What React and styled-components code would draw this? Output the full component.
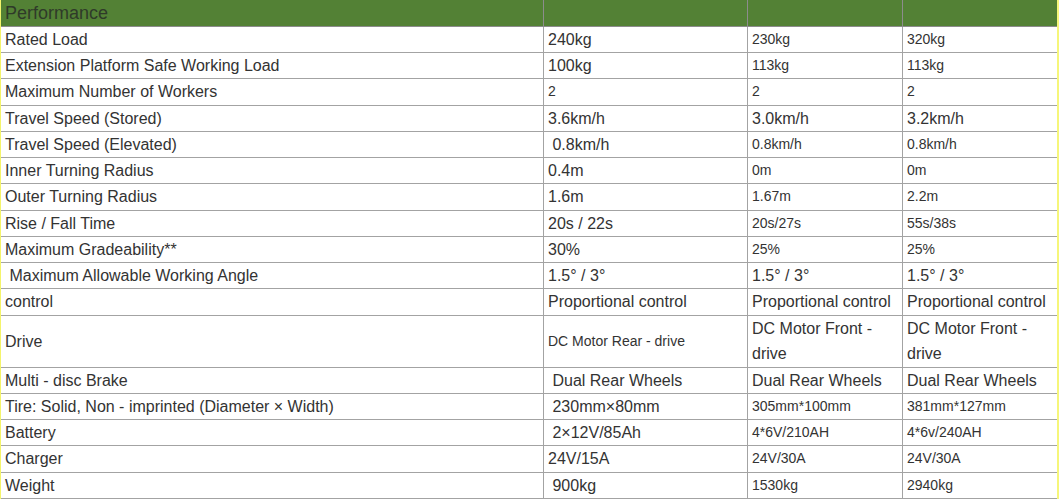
import React from 'react';
import styled, { createGlobalStyle } from 'styled-components';

const GlobalStyle = createGlobalStyle`
  html, body {
    margin: 0;
    padding: 0;
    background: #ffffff;
  }
  body {
    font-family: "Liberation Sans", Arial, sans-serif;
  }
`;

const Page = styled.div`
  display: flex;
  width: 1059px;
  height: 499px;
  overflow: hidden;
  border-left: 1px solid #f4f46a;
  border-right: 2px solid #f6f67a;
  box-sizing: border-box;
`;

const SpecTable = styled.table`
  border-collapse: collapse;
  table-layout: fixed;
  width: 1057px;
  margin-left: -1px;
  color: #333333;
`;

const Col = styled.col`
  width: ${p => p.$w}px;
`;

const HeadCell = styled.th`
  background: #538135;
  color: #2f3a29;
  font-weight: normal;
  font-size: 18px;
  text-align: left;
  height: 26px;
  padding: 0 4px;
  line-height: 25px;
  border: 1px solid #8c8c8c;
  border-top: none;
`;

const Cell = styled.td`
  font-size: ${p => (p.$small ? '14px' : '16px')};
  line-height: 25.2px;
  height: ${p => (p.$tall ? '52px' : '25.2px')};
  padding: 0 4px;
  vertical-align: middle;
  white-space: pre-wrap;
  border: 1px solid #a3a3a3;
  box-sizing: border-box;
`;

const columns = [543, 204, 155, 155];

// [text, small] where small means the 14px text used in some cells
const rows = [
  ['Rated Load', '240kg', ['230kg', 1], ['320kg', 1]],
  ['Extension Platform Safe Working Load', '100kg', ['113kg', 1], ['113kg', 1]],
  ['Maximum Number of Workers', ['2', 1], ['2', 1], ['2', 1]],
  ['Travel Speed (Stored)', '3.6km/h', '3.0km/h', '3.2km/h'],
  ['Travel Speed (Elevated)', ' 0.8km/h', ['0.8km/h', 1], ['0.8km/h', 1]],
  ['Inner Turning Radius', '0.4m', ['0m', 1], ['0m', 1]],
  ['Outer Turning Radius', '1.6m', ['1.67m', 1], ['2.2m', 1]],
  ['Rise / Fall Time', '20s / 22s', ['20s/27s', 1], ['55s/38s', 1]],
  ['Maximum Gradeability**', '30%', ['25%', 1], ['25%', 1]],
  [' Maximum Allowable Working Angle', '1.5° / 3°', '1.5° / 3°', '1.5° / 3°'],
  ['control', 'Proportional control', 'Proportional control', 'Proportional control'],
  ['Drive', ['DC Motor Rear - drive', 1], 'DC Motor Front - drive', 'DC Motor Front - drive'],
  ['Multi - disc Brake', ' Dual Rear Wheels', 'Dual Rear Wheels', 'Dual Rear Wheels'],
  ['Tire: Solid, Non - imprinted (Diameter × Width)', ' 230mm×80mm', ['305mm*100mm', 1], ['381mm*127mm', 1]],
  ['Battery', ' 2×12V/85Ah', ['4*6V/210AH', 1], ['4*6v/240AH', 1]],
  ['Charger', '24V/15A', ['24V/30A', 1], ['24V/30A', 1]],
  ['Weight', ' 900kg', ['1530kg', 1], ['2940kg', 1]],
];

const App = () => (
  <>
    <GlobalStyle />
    <Page>
      <SpecTable>
        <colgroup>
          {columns.map((w, i) => <Col key={i} $w={w} />)}
        </colgroup>
        <thead>
          <tr>
            <HeadCell>Performance</HeadCell>
            <HeadCell />
            <HeadCell />
            <HeadCell />
          </tr>
        </thead>
        <tbody>
          {rows.map(row => {
            const tall = row[0] === 'Drive';
            return (
              <tr key={row[0]}>
                {row.map((cell, i) => {
                  const [text, small] = Array.isArray(cell) ? cell : [cell, 0];
                  return (
                    <Cell key={i} $small={!!small} $tall={tall}>
                      {text}
                    </Cell>
                  );
                })}
              </tr>
            );
          })}
        </tbody>
      </SpecTable>
    </Page>
  </>
);

export default App;
